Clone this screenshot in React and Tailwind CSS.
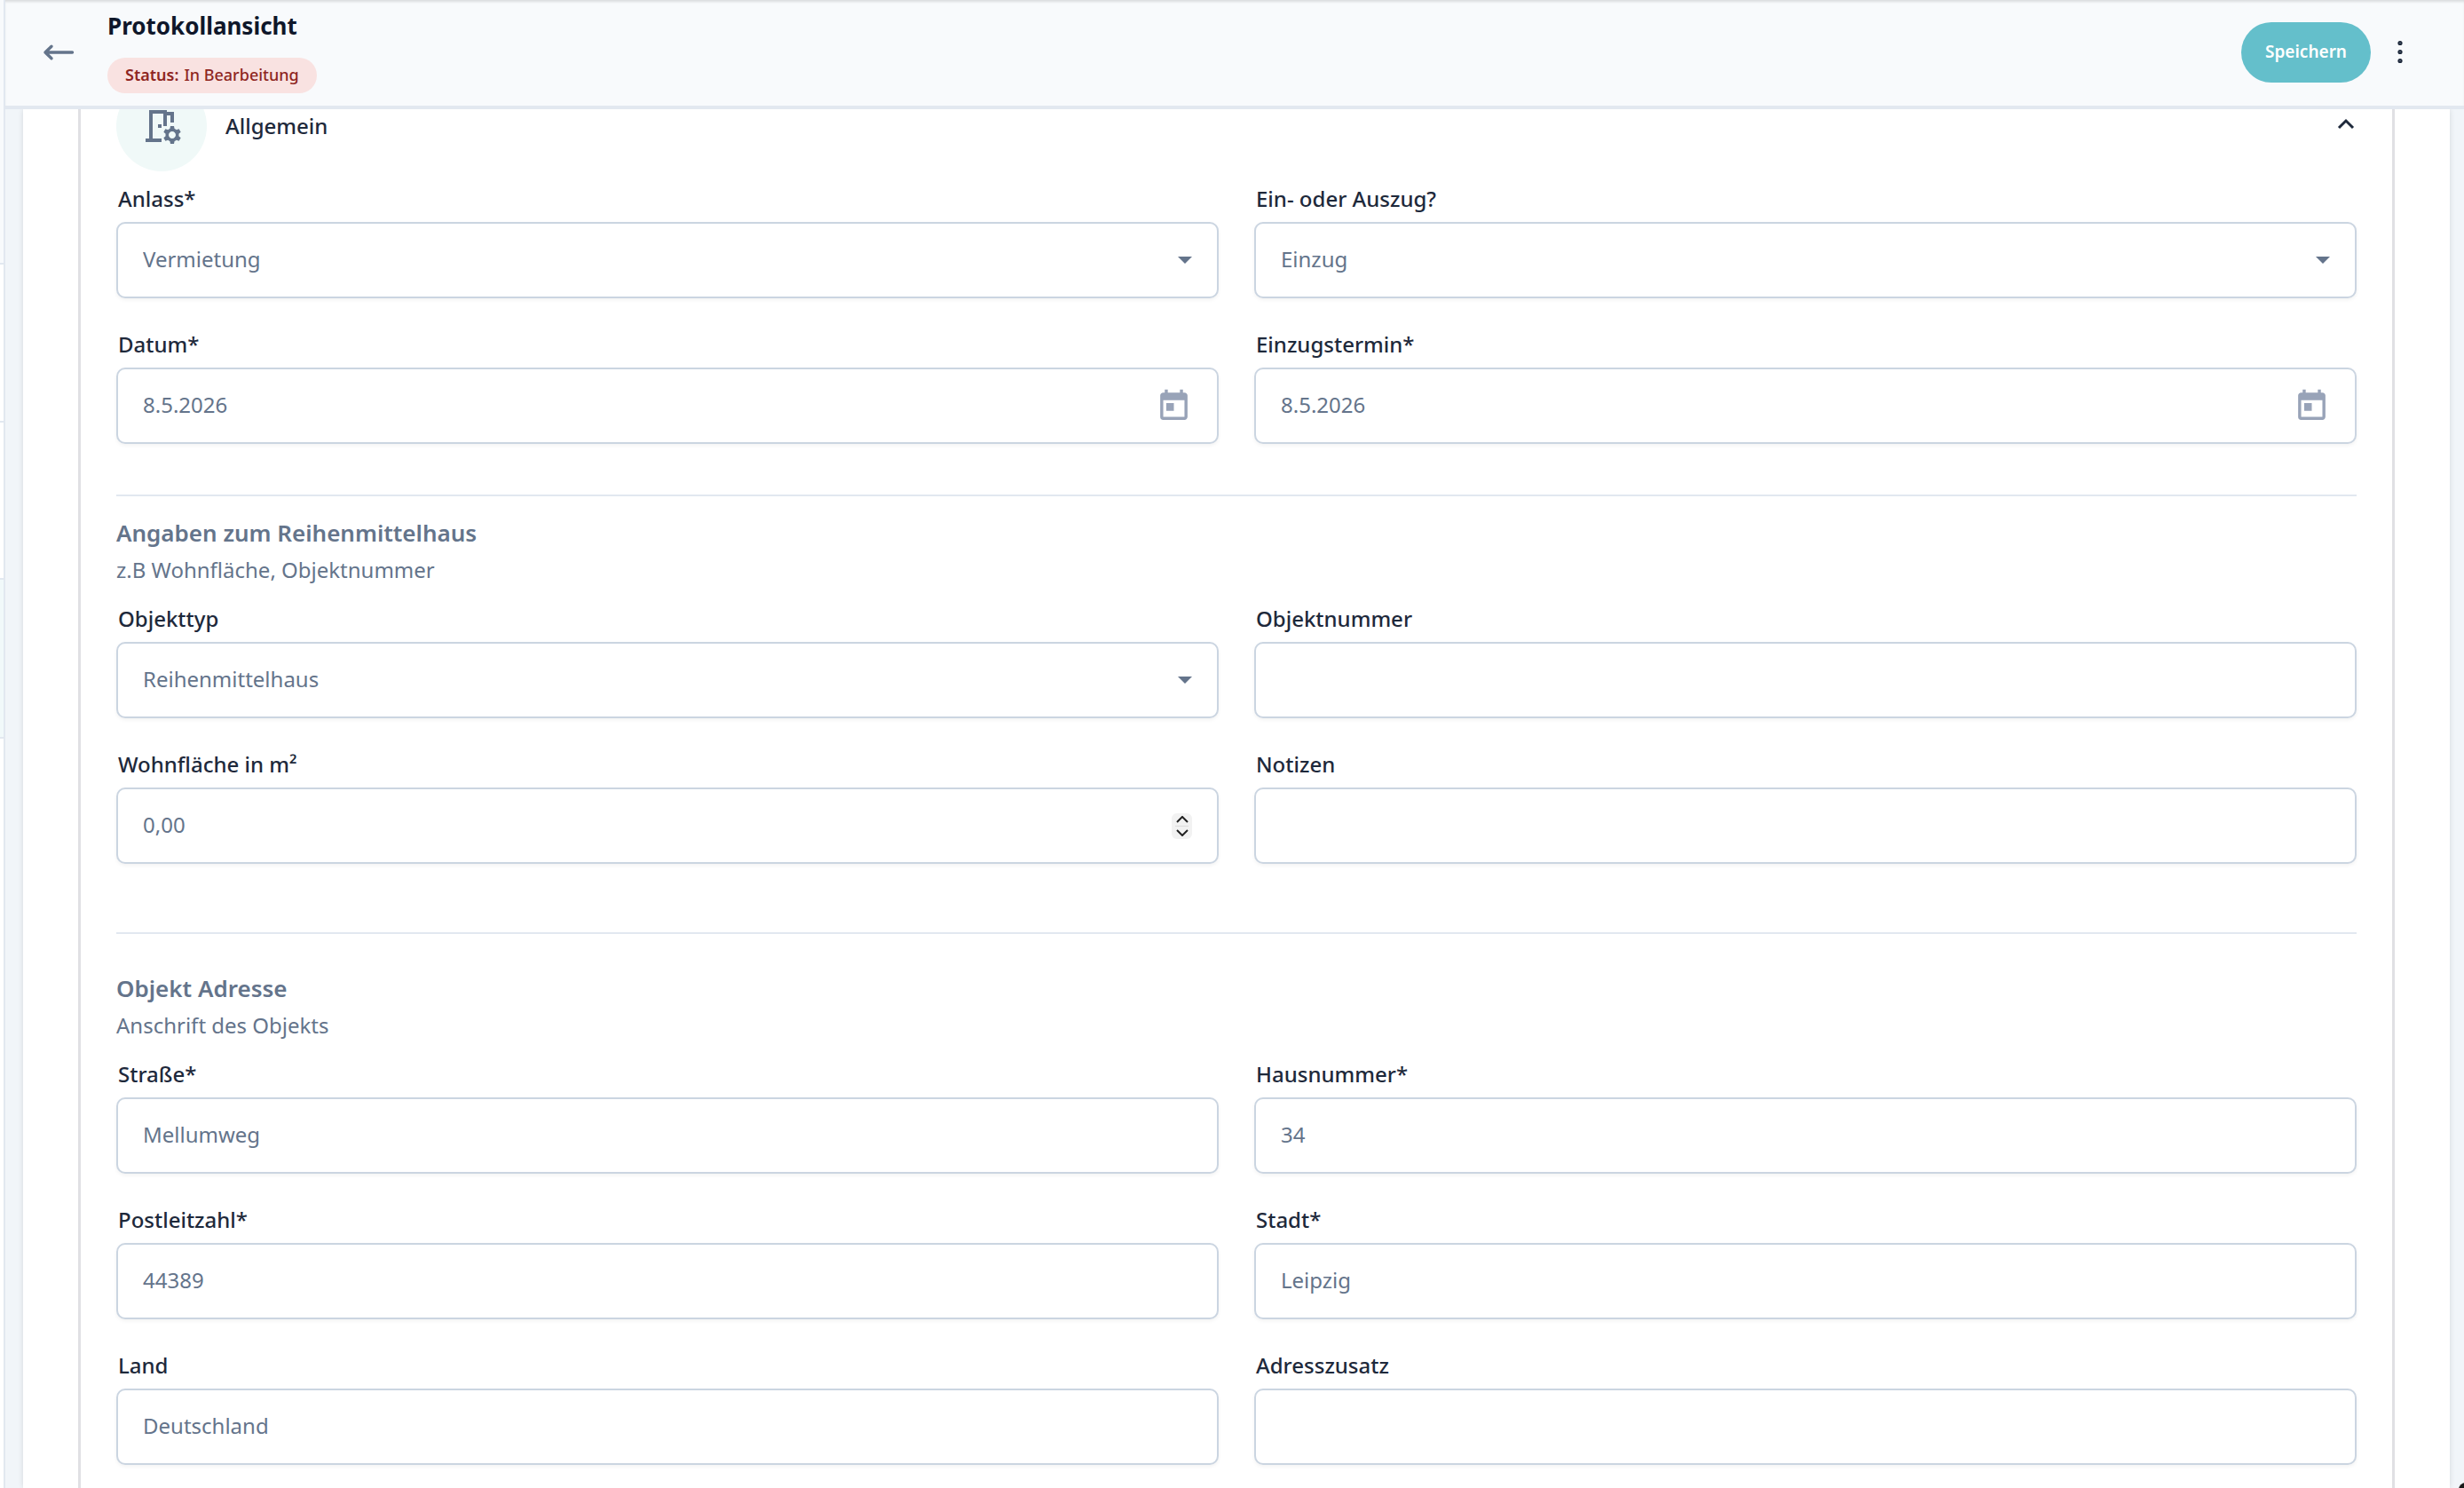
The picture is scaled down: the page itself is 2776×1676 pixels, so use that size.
import React, { useState } from 'react';
import { MdOutlineRoomPreferences, MdToday } from 'react-icons/md';

const boxClass =
  'block w-full h-[86px] rounded-[10px] border-2 border-[#cbd5e1] bg-white pb-[3px] pl-7 pr-20 text-[24px] text-[#64748b] shadow-[0_2px_4px_rgba(0,0,0,0.05)] outline-none focus:border-[#64bfcb]';

const Field = ({ id, label, required, children }) => (
  <div>
    <label htmlFor={id} className="mb-2.5 flex pl-0.5 text-[24px] leading-8 font-medium text-[#1e293b]">
      {label}
      {required && <span>*</span>}
    </label>
    <div className="relative">{children}</div>
  </div>
);

const TextField = ({ id, label, required, initial = '' }) => {
  const [value, setValue] = useState(initial);
  return (
    <Field id={id} label={label} required={required}>
      <input id={id} type="text" value={value} onChange={(e) => setValue(e.target.value)} className={boxClass} />
    </Field>
  );
};

const SelectField = ({ id, label, required, options }) => {
  const [value, setValue] = useState(options[0]);
  return (
    <Field id={id} label={label} required={required}>
      <select
        id={id}
        value={value}
        onChange={(e) => setValue(e.target.value)}
        className={`${boxClass} appearance-none`}
      >
        {options.map((option) => (
          <option key={option}>{option}</option>
        ))}
      </select>
      <svg
        viewBox="0 0 16 8"
        className="pointer-events-none absolute top-[39px] right-[30px] h-2 w-4 fill-[#64748b]"
        aria-hidden="true"
      >
        <path d="M0 0h16L8 8z" />
      </svg>
    </Field>
  );
};

const DateField = ({ id, label, required, initial }) => {
  const [value, setValue] = useState(initial);
  return (
    <Field id={id} label={label} required={required}>
      <input id={id} type="text" value={value} onChange={(e) => setValue(e.target.value)} className={boxClass} />
      <button type="button" aria-label="Kalender öffnen" className="absolute top-[23px] right-[30px] text-[#98a3b8]">
        <MdToday className="h-[41px] w-[41px]" />
      </button>
    </Field>
  );
};

const AreaField = ({ id, label }) => {
  const [value, setValue] = useState(0);
  const [draft, setDraft] = useState('0,00');

  const step = (delta) => {
    const next = Math.max(0, value + delta);
    setValue(next);
    setDraft(next.toFixed(2).replace('.', ','));
  };

  const handleChange = (e) => {
    setDraft(e.target.value);
    setValue(parseFloat(e.target.value.replace(',', '.')) || 0);
  };

  return (
    <Field id={id} label={label}>
      <input id={id} type="text" inputMode="decimal" value={draft} onChange={handleChange} className={boxClass} />
      <div className="absolute top-[29px] right-[30px] flex h-[29px] w-[23px] flex-col rounded-md bg-[#f2f2f2]">
        <button
          type="button"
          aria-label="Erhöhen"
          onClick={() => step(1)}
          className="flex flex-1 items-center justify-center"
        >
          <svg viewBox="0 0 14 8" className="h-2 w-3.5 fill-none stroke-[#222] stroke-2">
            <path d="M1 7l6-6 6 6" />
          </svg>
        </button>
        <div className="mx-1 h-px bg-[#dcdcdc]" />
        <button
          type="button"
          aria-label="Verringern"
          onClick={() => step(-1)}
          className="flex flex-1 items-center justify-center"
        >
          <svg viewBox="0 0 14 8" className="h-2 w-3.5 fill-none stroke-[#222] stroke-2">
            <path d="M1 1l6 6 6-6" />
          </svg>
        </button>
      </div>
    </Field>
  );
};

const SectionHeading = ({ title, subtitle }) => (
  <div className="mb-[23px] text-[#64748b]">
    <h2 className="text-[26px] leading-8 font-semibold">{title}</h2>
    <p className="mt-2.5 text-[24px] leading-8">{subtitle}</p>
  </div>
);

const FieldGrid = ({ children }) => <div className="grid grid-cols-2 gap-x-10 gap-y-9">{children}</div>;

const SideRail = () => (
  <aside className="flex w-1.5 shrink-0 flex-col border-r-2 border-[#e2e8f0] bg-white">
    <div className="h-[298px] border-b-2 border-[#e2e8f0] bg-[#f8fafc]" />
    <div className="h-[178px] border-b-2 border-[#e2e8f0]" />
    <div className="h-[177px] border-b-2 border-[#e2e8f0]" />
    <div className="h-[179px] border-b-2 border-[#e2e8f0] bg-[#f1f9fa]" />
  </aside>
);

const Header = () => (
  <header className="relative z-10 flex h-[123px] shrink-0 items-center border-b-4 border-[#e2e8f0] bg-[#f8fafc] pr-[60px] pb-0.5 pl-[41px] shadow-[inset_0_3px_3px_-1px_rgba(0,0,0,0.12)]">
    <button type="button" aria-label="Zurück" className="mr-9">
      <svg
        viewBox="0 0 38 20"
        className="h-5 w-[38px] fill-none stroke-[#64748b]"
        strokeWidth="3.4"
        strokeLinecap="round"
        strokeLinejoin="round"
      >
        <path d="M34.5 10H4M11 3.3L4 10l7 6.7" />
      </svg>
    </button>
    <div className="flex flex-1 flex-col items-start gap-5">
      <h1 className="text-[26px] leading-8 font-bold text-[#0f172a]">Protokollansicht</h1>
      <span className="flex h-10 items-center gap-1.5 rounded-full bg-[#f9e2e1] px-5 text-[18px] font-medium text-[#8f2622]">
        <b className="font-semibold">Status:</b> In Bearbeitung
      </span>
    </div>
    <button
      type="button"
      className="h-[68px] rounded-full bg-[#64bfcb] px-[27px] text-[19px] font-semibold text-white hover:bg-[#55b2be]"
    >
      Speichern
    </button>
    <button type="button" aria-label="Weitere Aktionen" className="ml-[21px]">
      <svg viewBox="0 0 24 32" className="h-8 w-6 fill-[#94a3b8] stroke-[#1e293b] stroke-2">
        <circle cx="12" cy="5.5" r="1.6" />
        <circle cx="12" cy="15.5" r="1.6" />
        <circle cx="12" cy="25.5" r="1.6" />
      </svg>
    </button>
  </header>
);

const App = () => {
  const [open, setOpen] = useState(true);

  return (
    <div className="flex h-screen overflow-hidden bg-[#f1f5f9] font-['Noto_Sans','Open_Sans',sans-serif]">
      <SideRail />
      <div className="flex min-w-0 flex-1 flex-col">
        <Header />
        <main className="flex min-h-0 flex-1 flex-col pr-4 pl-5">
          <div className="flex flex-1 flex-col bg-white px-[62px] shadow-[0_0_6px_rgba(0,0,0,0.12)]">
            <div className="flow-root flex-1 border-x-3 border-[#e0e0e4] px-10">
              <button
                type="button"
                onClick={() => setOpen(!open)}
                aria-expanded={open}
                className="-mt-8 mb-[15px] flex w-full items-center text-left"
              >
                <span className="flex h-[102px] w-[102px] items-center justify-center rounded-full bg-[#f0f9f8]">
                  <MdOutlineRoomPreferences className="h-12 w-12 text-[#64748b]" />
                </span>
                <span className="ml-[21px] flex-1 text-[24px] leading-8 font-medium text-[#1e293b]">Allgemein</span>
                <svg viewBox="0 0 24 20" className="h-5 w-6 fill-none stroke-[#1e293b]" strokeWidth="3">
                  <path d="M4 12l8-8 8 8" />
                </svg>
              </button>

              {open && (
                <>
                  <FieldGrid>
                    <SelectField
                      id="anlass"
                      label="Anlass"
                      required
                      options={['Vermietung', 'Verkauf', 'Besichtigung']}
                    />
                    <SelectField id="richtung" label="Ein- oder Auszug?" options={['Einzug', 'Auszug']} />
                    <DateField id="datum" label="Datum" required initial="8.5.2026" />
                    <DateField id="einzugstermin" label="Einzugstermin" required initial="8.5.2026" />
                  </FieldGrid>

                  <hr className="mt-[57px] mb-[25px] border-t-2 border-[#e2e8f0]" />
                  <SectionHeading title="Angaben zum Reihenmittelhaus" subtitle="z.B Wohnfläche, Objektnummer" />
                  <FieldGrid>
                    <SelectField
                      id="objekttyp"
                      label="Objekttyp"
                      options={['Reihenmittelhaus', 'Reihenendhaus', 'Wohnung']}
                    />
                    <TextField id="objektnummer" label="Objektnummer" />
                    <AreaField id="wohnflaeche" label="Wohnfläche in m²" />
                    <TextField id="notizen" label="Notizen" />
                  </FieldGrid>

                  <hr className="mt-[77px] mb-[45px] border-t-2 border-[#e2e8f0]" />
                  <SectionHeading title="Objekt Adresse" subtitle="Anschrift des Objekts" />
                  <FieldGrid>
                    <TextField id="strasse" label="Straße" required initial="Mellumweg" />
                    <TextField id="hausnummer" label="Hausnummer" required initial="34" />
                    <TextField id="plz" label="Postleitzahl" required initial="44389" />
                    <TextField id="stadt" label="Stadt" required initial="Leipzig" />
                    <TextField id="land" label="Land" initial="Deutschland" />
                    <TextField id="adresszusatz" label="Adresszusatz" />
                  </FieldGrid>
                </>
              )}
            </div>
          </div>
        </main>
      </div>
      <div className="fixed -right-2.5 -bottom-2.5 h-4 w-4 rounded-full bg-[#1a1a1a]" />
    </div>
  );
};

export default App;
